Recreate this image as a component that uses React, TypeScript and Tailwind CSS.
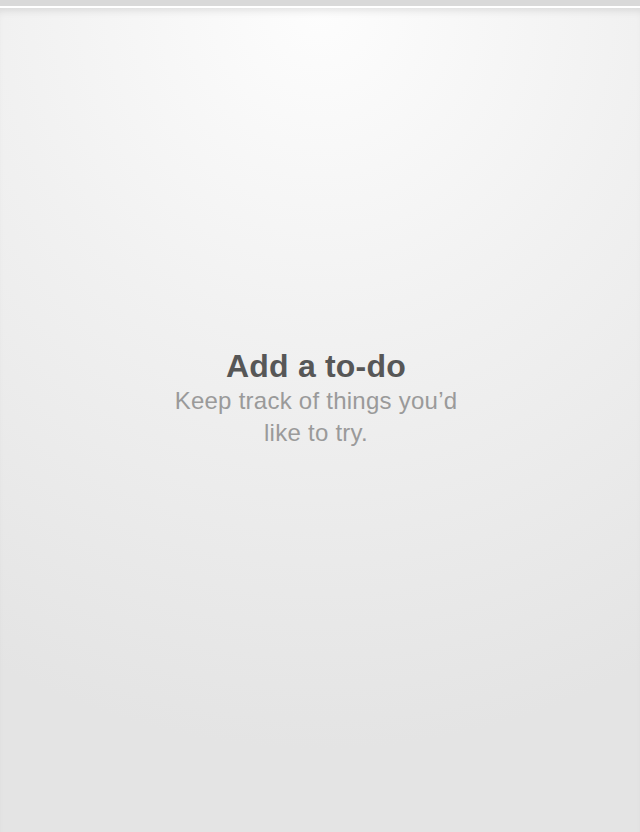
export default function App() {
  return (
    <div className="flex h-[832px] w-full flex-col overflow-hidden font-['Liberation_Sans',Arial,sans-serif]">
      <div className="h-[6px] bg-[#d9d9d9]" />
      <div className="h-[2px] bg-white" />
      <main className="flex flex-1 flex-col items-center bg-[radial-gradient(ellipse_110%_90%_at_50%_0%,#fdfdfd_0%,#f1f1f1_45%,#e4e4e4_100%)] pt-[340px] pr-[8px] shadow-[inset_0_7px_8px_-5px_rgba(0,0,0,0.12)]">
        <h1 className="text-[32px] font-bold leading-[36px] tracking-[0.2px] text-[#575757]">
          Add a to-do
        </h1>
        <p className="mt-[1px] max-w-[310px] text-center text-[24px] leading-[32px] tracking-[0.25px] text-[#9a9a9a]">
          Keep track of things you’d like to try.
        </p>
      </main>
    </div>
  );
}
